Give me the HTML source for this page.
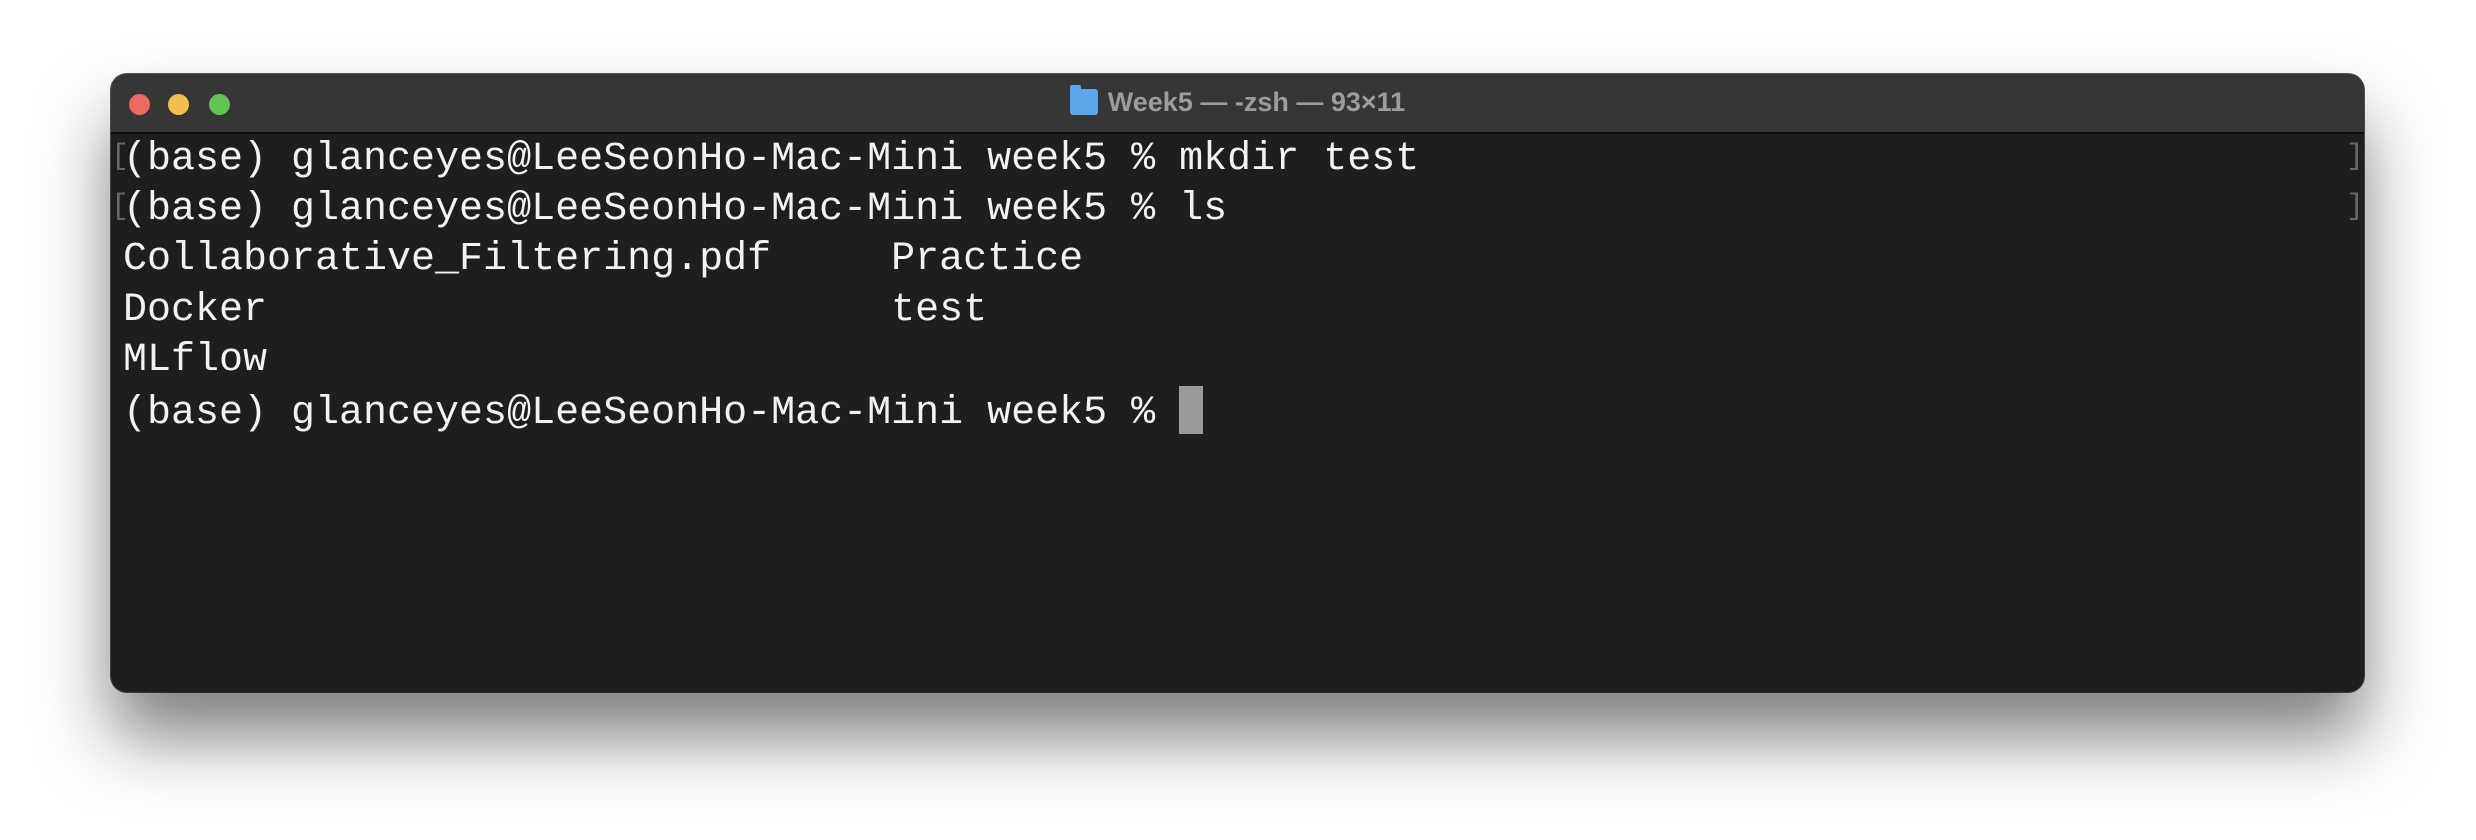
<!DOCTYPE html>
<html><head><meta charset="utf-8"><style>
html,body{margin:0;padding:0;width:2476px;height:840px;background:#fff;overflow:hidden}
.win{position:absolute;left:111px;top:74px;width:2253px;height:618px;border-radius:16px;background:#1e1e1e;box-shadow:0 45px 70px rgba(0,0,0,0.5),0 0 0 1px #555;overflow:hidden}
.tb{position:absolute;left:0;top:0;right:0;height:58px;background:#363636;border-bottom:2px solid #0c0c0c}
.dot{position:absolute;top:20px;width:21px;height:21px;border-radius:50%}
.title{position:absolute;left:0;right:0;top:13px;text-align:center;font:bold 27px "Liberation Sans",sans-serif;color:#9c9c9c}
.folder{display:inline-block;vertical-align:-4px;margin-right:10px;width:28px;height:26px;background:#5aa6e8;border-radius:2px 3px 3px 3px;position:relative}
.folder:before{content:"";position:absolute;left:0;top:-4px;width:11px;height:5px;background:#5aa6e8;border-radius:2px 2px 0 0}
.term{position:absolute;left:12px;top:61px;font:40px/50.2px "Liberation Mono",monospace;color:#f2f2f2;white-space:pre}
.cur{display:inline-block;width:24px;height:48px;background:#9a9a9a;vertical-align:-11px}
.br{position:absolute;color:#666;font:30px "Liberation Mono",monospace}
</style></head><body>
<div class="win">
<div class="tb">
<div class="dot" style="left:18px;background:#ec6a5e"></div>
<div class="dot" style="left:57px;background:#f4bf4f"></div>
<div class="dot" style="left:98px;background:#61c554"></div>
<div class="title"><span class="folder"></span>Week5 — -zsh — 93×11</div>
</div>
<div class="br" style="left:0;top:66px">[</div><div class="br" style="left:0;top:116px">[</div>
<div class="br" style="right:0;top:66px">]</div><div class="br" style="right:0;top:116px">]</div>
<div class="term">(base) glanceyes@LeeSeonHo-Mac-Mini week5 % mkdir test
(base) glanceyes@LeeSeonHo-Mac-Mini week5 % ls
Collaborative_Filtering.pdf     Practice
Docker                          test
MLflow
(base) glanceyes@LeeSeonHo-Mac-Mini week5 % <span class="cur"></span></div>
</div>
</body></html>
